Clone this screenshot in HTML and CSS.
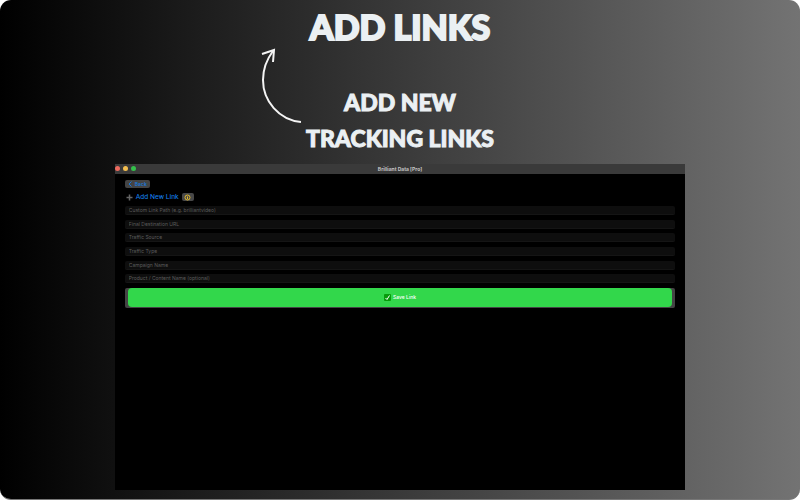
FILE: index.html
```html
<!DOCTYPE html>
<html lang="en">
<head>
  <meta charset="UTF-8" />
  <meta name="viewport" content="width=device-width, initial-scale=1" />
  <title>Add Links</title>
  <link rel="stylesheet" href="styles.css">
</head>
<body>
  <main class="slide">
    <header class="intro">
      <h1 class="title">ADD LINKS</h1>
      <p class="subtitle">ADD NEW<br>TRACKING LINKS</p>
      <svg class="arrow" width="44" height="76" viewBox="0 0 44 76" aria-hidden="true">
        <path d="M41 74C19 72 3 53 3 32C3 21 7 11 13 3" />
        <path d="M2 6L14 2L13 14" />
      </svg>
    </header>

    <section class="window">
      <div class="titlebar">
        <div class="lights">
          <span class="light red"></span>
          <span class="light yellow"></span>
          <span class="light green"></span>
        </div>
        <span class="window-title">Brilliant Data [Pro]</span>
      </div>

      <div class="content">
        <button class="back-btn" type="button">
          <svg width="4" height="6" viewBox="0 0 4 6" aria-hidden="true"><path d="M3.5 .5L1 3L3.5 5.5" /></svg>
          Back
        </button>

        <div class="heading">
          <svg class="plus" width="7" height="7" viewBox="0 0 7 7" aria-hidden="true"><path d="M3.5 .5V6.5M.5 3.5H6.5" /></svg>
          <h2>Add New Link</h2>
          <button class="info-btn" type="button" aria-label="Info">
            <svg width="7" height="7" viewBox="0 0 14 14" aria-hidden="true">
              <circle cx="7" cy="7" r="5" />
              <path d="M7 4V5M7 6V10" />
            </svg>
          </button>
        </div>

        <form class="link-form">
          <input type="text" placeholder="Custom Link Path (e.g. brilliantvideo)" aria-label="Custom Link Path" />
          <input type="text" placeholder="Final Destination URL" aria-label="Final Destination URL" />
          <input type="text" placeholder="Traffic Source" aria-label="Traffic Source" />
          <input type="text" placeholder="Traffic Type" aria-label="Traffic Type" />
          <input type="text" placeholder="Campaign Name" aria-label="Campaign Name" />
          <input type="text" placeholder="Product / Content Name (optional)" aria-label="Product / Content Name" />
          <button class="save-btn" type="button">
            <span class="save-label">
              <svg width="7" height="7" viewBox="0 0 14 14" aria-hidden="true">
                <rect width="14" height="14" rx="2" />
                <path d="M3 8L6 11L11 3" />
              </svg>
              Save Link
            </span>
          </button>
        </form>
      </div>
    </section>
  </main>
</body>
</html>
```
FILE: styles.css
```css
* {
  box-sizing: border-box;
}

body {
  margin: 0;
  background: #fff;
  font-family: Inter, "Liberation Sans", sans-serif;
}

.slide {
  display: flex;
  flex-direction: column;
  align-items: center;
  min-height: 100vh;
  padding-bottom: 9px;
  border-bottom: 1px solid #777;
  border-radius: 11px;
  background: linear-gradient(90deg, #000 0%, #111 15%, #737373 100%);
}

.intro {
  position: relative;
  height: 164px;
  padding-top: 5px;
  text-align: center;
  color: #ebf0f3;
  font-family: Lato, sans-serif;
  font-weight: 900;
  -webkit-text-stroke: 2px #ebf0f3;
}

.title {
  margin: 0 0 35px;
  font-size: 34px;
  line-height: 44px;
  font-weight: 900;
}

.subtitle {
  margin: 0;
  font-size: 23px;
  line-height: 36px;
  -webkit-text-stroke-width: 1px;
}

/* hangs off the left side of the subtitle */
.arrow {
  position: absolute;
  right: calc(50% + 96px);
  top: 48px;
  fill: none;
  stroke: #f4f4f4;
  stroke-width: 2;
}

.window {
  display: flex;
  flex: 1;
  flex-direction: column;
  width: 71.3%;
  background: #000;
}

.titlebar {
  display: grid;
  grid-template-columns: 1fr auto 1fr;
  align-items: center;
  height: 10px;
  padding-bottom: 1px;
  background: #3a3a3a;
}

.lights {
  display: flex;
  gap: 3px;
}

.light {
  width: 5px;
  height: 5px;
  border-radius: 50%;
}

.red { background: #ed6a5e; }
.yellow { background: #f5bf4f; }
.green { background: #34c04b; }

.window-title {
  color: #c4c4c4;
  font-size: 5px;
  line-height: 8px;
  font-weight: 700;
}

.content {
  padding: 6px 10px;
}

button {
  border: none;
  padding: 0;
  font-family: inherit;
  cursor: pointer;
}

.back-btn {
  display: flex;
  align-items: center;
  gap: 3px;
  height: 8px;
  padding: 0 3px;
  border-radius: 2px;
  background: #444;
  color: #1a78d8;
  font-size: 5px;
  line-height: 8px;
  font-weight: 600;
}

.back-btn svg {
  fill: none;
  stroke: #1a78d8;
}

.heading {
  display: flex;
  align-items: center;
  gap: 3px;
  height: 8px;
  margin: 5px 0;
  padding-left: 1px;
}

.heading h2 {
  margin: 0;
  color: #1683f2;
  font-family: Roboto, sans-serif;
  font-size: 7px;
  line-height: 8px;
  font-weight: 400;
}

.plus {
  stroke: #666;
  stroke-width: 1.5;
}

.info-btn {
  display: flex;
  align-items: center;
  justify-content: center;
  width: 12px;
  height: 8px;
  border-radius: 2px;
  background: #484848;
}

.info-btn svg {
  fill: none;
  stroke: #e0b92f;
  stroke-width: 2;
}

.link-form {
  display: flex;
  flex-direction: column;
  justify-content: space-between;
  height: 102px;
}

.link-form input {
  width: 100%;
  height: 9px;
  padding: 0 4px;
  border: none;
  border-bottom: 1px solid #151515;
  border-radius: 2px;
  background: #0e0e0e;
  color: #ccc;
  font-family: inherit;
  font-size: 5px;
  line-height: 8px;
}

.link-form input::placeholder {
  color: #5c5c5c;
}

.save-btn {
  height: 20px;
  padding: 0 3px;
  border-radius: 2px;
  background: #444;
}

.save-label {
  display: flex;
  align-items: center;
  justify-content: center;
  gap: 2px;
  height: 19px;
  border-radius: 4px;
  background: #32d74b;
  color: #fff;
  font-size: 5px;
  line-height: 19px;
  font-weight: 500;
}

.save-label rect {
  fill: #079b0b;
}

.save-label path {
  fill: none;
  stroke: #fff;
  stroke-width: 2;
}
```
